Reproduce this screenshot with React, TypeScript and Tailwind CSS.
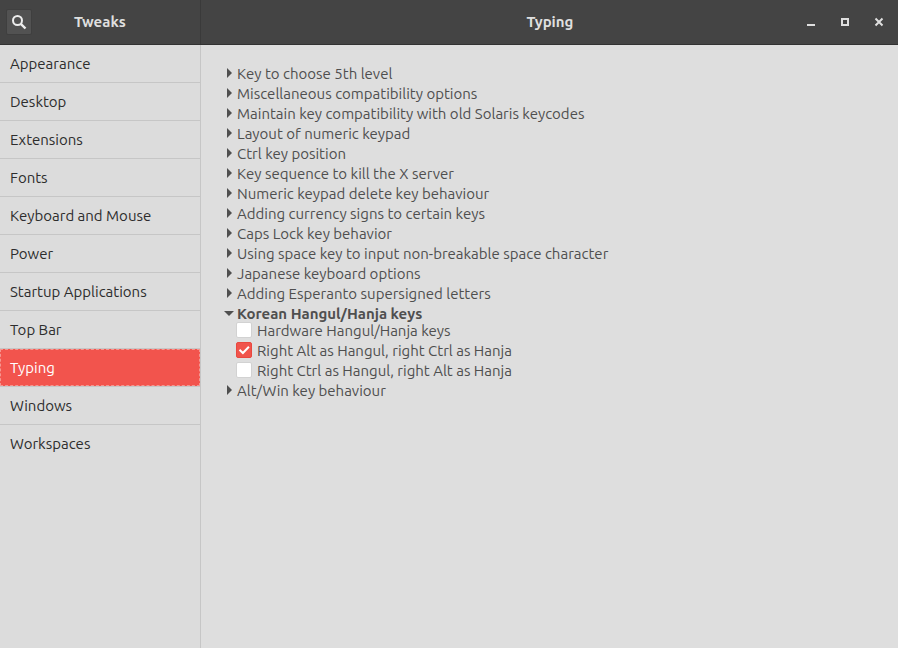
import { useState } from 'react';

const pages = [
  'Appearance',
  'Desktop',
  'Extensions',
  'Fonts',
  'Keyboard and Mouse',
  'Power',
  'Startup Applications',
  'Top Bar',
  'Typing',
  'Windows',
  'Workspaces',
];

type Group = { title: string; options?: string[] };

const groups: Group[] = [
  { title: 'Key to choose 5th level' },
  { title: 'Miscellaneous compatibility options' },
  { title: 'Maintain key compatibility with old Solaris keycodes' },
  { title: 'Layout of numeric keypad' },
  { title: 'Ctrl key position' },
  { title: 'Key sequence to kill the X server' },
  { title: 'Numeric keypad delete key behaviour' },
  { title: 'Adding currency signs to certain keys' },
  { title: 'Caps Lock key behavior' },
  { title: 'Using space key to input non-breakable space character' },
  { title: 'Japanese keyboard options' },
  { title: 'Adding Esperanto supersigned letters' },
  {
    title: 'Korean Hangul/Hanja keys',
    options: [
      'Hardware Hangul/Hanja keys',
      'Right Alt as Hangul, right Ctrl as Hanja',
      'Right Ctrl as Hangul, right Alt as Hanja',
    ],
  },
  { title: 'Alt/Win key behaviour' },
];

function Arrow({ open }: { open: boolean }) {
  return (
    <svg className="h-5 w-[13px] shrink-0" viewBox="0 0 13 20" fill="#4f4f4f" aria-hidden="true">
      {open ? <path d="M0 7h10L5 12z" /> : <path d="M3 4v10l5-5z" />}
    </svg>
  );
}

function Option({ label, checked, onToggle }: { label: string; checked: boolean; onToggle: () => void }) {
  return (
    <label className="flex h-5 w-fit items-center gap-[5px]">
      <span className="grid h-5 w-4 grid-cols-1 grid-rows-1 items-start pt-px">
        <input
          type="checkbox"
          checked={checked}
          onChange={onToggle}
          className="col-start-1 row-start-1 size-4 appearance-none rounded-[2px] border border-[#d2d2d2] bg-white checked:border-[#e9483f] checked:bg-[#f0544c]"
        />
        {checked && (
          <svg className="pointer-events-none col-start-1 row-start-1 size-4" viewBox="0 0 16 16" fill="none" stroke="#fff" strokeWidth="2" aria-hidden="true">
            <path d="M3.5 7.7l3.4 3.3 6-6.2" />
          </svg>
        )}
      </span>
      {label}
    </label>
  );
}

function Header() {
  return (
    <header className="flex h-[45px] shrink-0 border-b border-[#323232] bg-[#444444] font-bold text-[#dfdfdf]">
      <div className="flex w-[201px] shrink-0 items-center border-r border-[#3a3a3a] px-1.5">
        <button aria-label="Search" className="flex size-[26px] shrink-0 items-center justify-center rounded-[2px] border border-[#3f3f3f] bg-[#525252]">
          <svg className="size-4 shrink-0" viewBox="0 0 16 16" fill="none" stroke="#eeeeee" aria-hidden="true">
            <circle cx="6.5" cy="6.5" r="4.5" strokeWidth="2" />
            <path d="M9.8 9.8l4.7 4.7" strokeWidth="2.4" />
          </svg>
        </button>
        <h1 className="flex-1 pr-[26px] text-center">Tweaks</h1>
      </div>
      <div className="flex flex-1 items-center">
        <h2 className="flex-1 pl-24 text-center">Typing</h2>
        <div className="flex gap-[18px] pr-[11px]">
          <button aria-label="Minimize" className="size-4">
            <svg viewBox="0 0 16 16" fill="#dfdfdf" aria-hidden="true">
              <path d="M4 10h8v2H4z" />
            </svg>
          </button>
          <button aria-label="Maximize" className="size-4">
            <svg viewBox="0 0 16 16" fill="none" stroke="#dfdfdf" strokeWidth="2" aria-hidden="true">
              <path d="M5 5h6v6H5z" />
            </svg>
          </button>
          <button aria-label="Close" className="size-4">
            <svg viewBox="0 0 16 16" fill="none" stroke="#dfdfdf" strokeWidth="2" aria-hidden="true">
              <path d="M4.5 4.5l7 7M11.5 4.5l-7 7" />
            </svg>
          </button>
        </div>
      </div>
    </header>
  );
}

export default function App() {
  const [page, setPage] = useState('Typing');
  const [open, setOpen] = useState('Korean Hangul/Hanja keys');
  const [chosen, setChosen] = useState(['Right Alt as Hangul, right Ctrl as Hanja']);

  const toggle = (option: string) =>
    setChosen((list) => (list.includes(option) ? list.filter((o) => o !== option) : [...list, option]));

  return (
    <div className="flex min-h-screen flex-col bg-[#dedede] font-['Ubuntu','Noto_Sans',sans-serif] text-[15px] leading-5">
      <Header />
      <div className="flex flex-1">
        <nav className="w-[201px] shrink-0 border-r border-[#c6c6c6] bg-[#dcdcdc] text-[#2d2d2d]">
          <ul>
            {pages.map((name) => (
              <li key={name} className="h-[38px] border-b border-[#c6c6c6] last:border-b-0">
                <button
                  onClick={() => setPage(name)}
                  className={
                    name === page
                      ? 'h-full w-full border border-dashed border-[#f69690] bg-[#f2544d] px-[9px] text-left text-white'
                      : 'h-full w-full px-2.5 text-left'
                  }
                >
                  {name}
                </button>
              </li>
            ))}
          </ul>
        </nav>
        <main className="flex-1 px-[23px] py-[19px] text-[#4f4f4f]">
          {groups.map(({ title, options }) => {
            const isOpen = title === open;
            return (
              <section key={title}>
                <button
                  aria-expanded={isOpen}
                  onClick={() => setOpen(isOpen ? '' : title)}
                  className={isOpen ? 'flex h-[17px] font-bold' : 'flex h-5'}
                >
                  <Arrow open={isOpen} />
                  {title}
                </button>
                {isOpen && options && (
                  <div className="pl-3">
                    {options.map((option) => (
                      <Option key={option} label={option} checked={chosen.includes(option)} onToggle={() => toggle(option)} />
                    ))}
                  </div>
                )}
              </section>
            );
          })}
        </main>
      </div>
    </div>
  );
}
